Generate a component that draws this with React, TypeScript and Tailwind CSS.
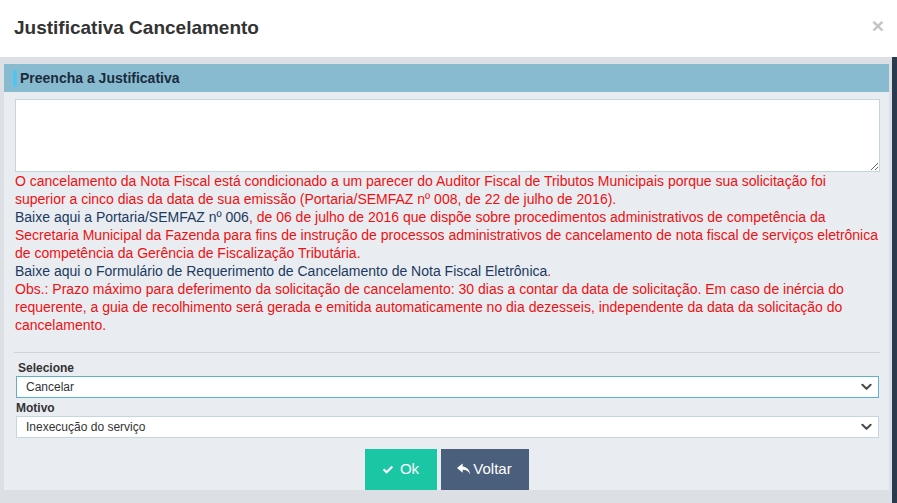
import React from "react";

const font = { fontFamily: '"Liberation Sans", Arial, sans-serif' };

function Chevron() {
  return (
    <svg viewBox="0 0 12 8" className="h-[8px] w-[11px]" fill="none" stroke="#4a4a4a" strokeWidth="2.2" strokeLinecap="round" strokeLinejoin="round">
      <path d="M1.5 1.5 6 6l4.5-4.5" />
    </svg>
  );
}

function SelectBox({ value, focused }: { value: string; focused?: boolean }) {
  return (
    <div
      className={`flex h-[22px] items-center justify-between bg-white pl-[9px] pr-[6px] text-[12px] text-[#333] border ${
        focused ? "border-[#5fb0c9]" : "border-[#c4d6df]"
      }`}
    >
      <span>{value}</span>
      <Chevron />
    </div>
  );
}

export default function App() {
  return (
    <div className="h-[503px] w-[897px] overflow-hidden bg-[#dcdfe3]" style={font}>
      <div className="flex h-[57px] items-start justify-between bg-white pl-[14px] pr-[13px] pt-[16px]">
        <h4 className="text-[19px] font-bold text-[#333] leading-[24px]">Justificativa Cancelamento</h4>
        <span className="text-[21px] font-bold leading-[16px] text-[#c4c4c4] mt-[2px]">×</span>
      </div>
      <div className="flex h-[446px]">
        <div className="flex-1 pl-[4px] pr-[3px] pt-[7px]">
          <div className="flex h-[28px] items-center bg-[#88bbcf] pl-[9px]">
            <span className="mr-[3px] h-[17px] w-[4px] bg-[#55c3ef]" />
            <span className="text-[14px] font-bold text-[#1b2b3c]">Preencha a Justificativa</span>
          </div>
          <div className="h-[398px] bg-[#e9ecf1] pl-[11px] pr-[8px] pt-[7px]">
            <textarea className="block h-[73px] w-[865px] resize-y border border-[#c2d6dc] bg-white" />
            <div className="w-[866px] text-[14px] leading-[18px] text-[#ee1111]">
              <p>
                O cancelamento da Nota Fiscal está condicionado a um parecer do Auditor Fiscal de Tributos Municipais porque sua solicitação foi
                <br />
                superior a cinco dias da data de sua emissão (Portaria/SEMFAZ nº 008, de 22 de julho de 2016).
              </p>
              <p>
                <a className="text-[#1c3a5e]">Baixe aqui a Portaria/SEMFAZ nº 006</a>, de 06 de julho de 2016 que dispõe sobre procedimentos administrativos de competência da Secretaria Municipal da Fazenda para fins de instrução de processos administrativos de cancelamento de nota fiscal de serviços eletrônica de competência da Gerência de Fiscalização Tributária.
              </p>
              <p>
                <a className="text-[#1c3a5e]">Baixe aqui o Formulário de Requerimento de Cancelamento de Nota Fiscal Eletrônica</a>.
              </p>
              <p>
                Obs.: Prazo máximo para deferimento da solicitação de cancelamento: 30 dias a contar da data de solicitação. Em caso de inércia do requerente, a guia de recolhimento será gerada e emitida automaticamente no dia dezesseis, independente da data da solicitação do cancelamento.
              </p>
            </div>
            <hr className="mt-[18px] border-t border-[#cfd2d6] w-[866px] -ml-[1px]" />
            <div className="mt-[7px] pl-[1px] pr-[2px]">
              <label className="block pl-[2px] text-[12px] font-bold leading-[16px] text-[#333]">Selecione</label>
              <SelectBox value="Cancelar" focused />
              <label className="block pt-[2px] text-[12px] font-bold leading-[16px] text-[#333]">Motivo</label>
              <SelectBox value="Inexecução do serviço" />
            </div>
            <div className="mt-[11px] flex justify-center gap-[4px] pr-[3px]">
              <button className="flex h-[41px] w-[72px] items-center justify-center gap-[6px] bg-[#1bc6a4] text-[15px] text-white">
                <svg viewBox="0 0 14 11" className="h-[10px] w-[12px]" fill="white">
                  <path d="M1 5.6 2.8 3.8 5.3 6.3 11.2.4 13 2.2 5.3 9.9z" />
                </svg>
                Ok
              </button>
              <button className="flex h-[41px] w-[88px] items-center justify-center gap-[2px] bg-[#4a5f7b] text-[15px] text-white">
                <svg viewBox="0 0 16 14" className="h-[13px] w-[14px]" fill="white">
                  <path d="M6.5 0 0 5.3l6.5 5.3V7.3c4 0 6.7 1.4 8.5 5.2C14.5 7.8 11.8 4.3 6.5 3.6z" />
                </svg>
                Voltar
              </button>
            </div>
          </div>
        </div>
        <div className="w-[6px] bg-[#2b3b4e]" />
      </div>
    </div>
  );
}
